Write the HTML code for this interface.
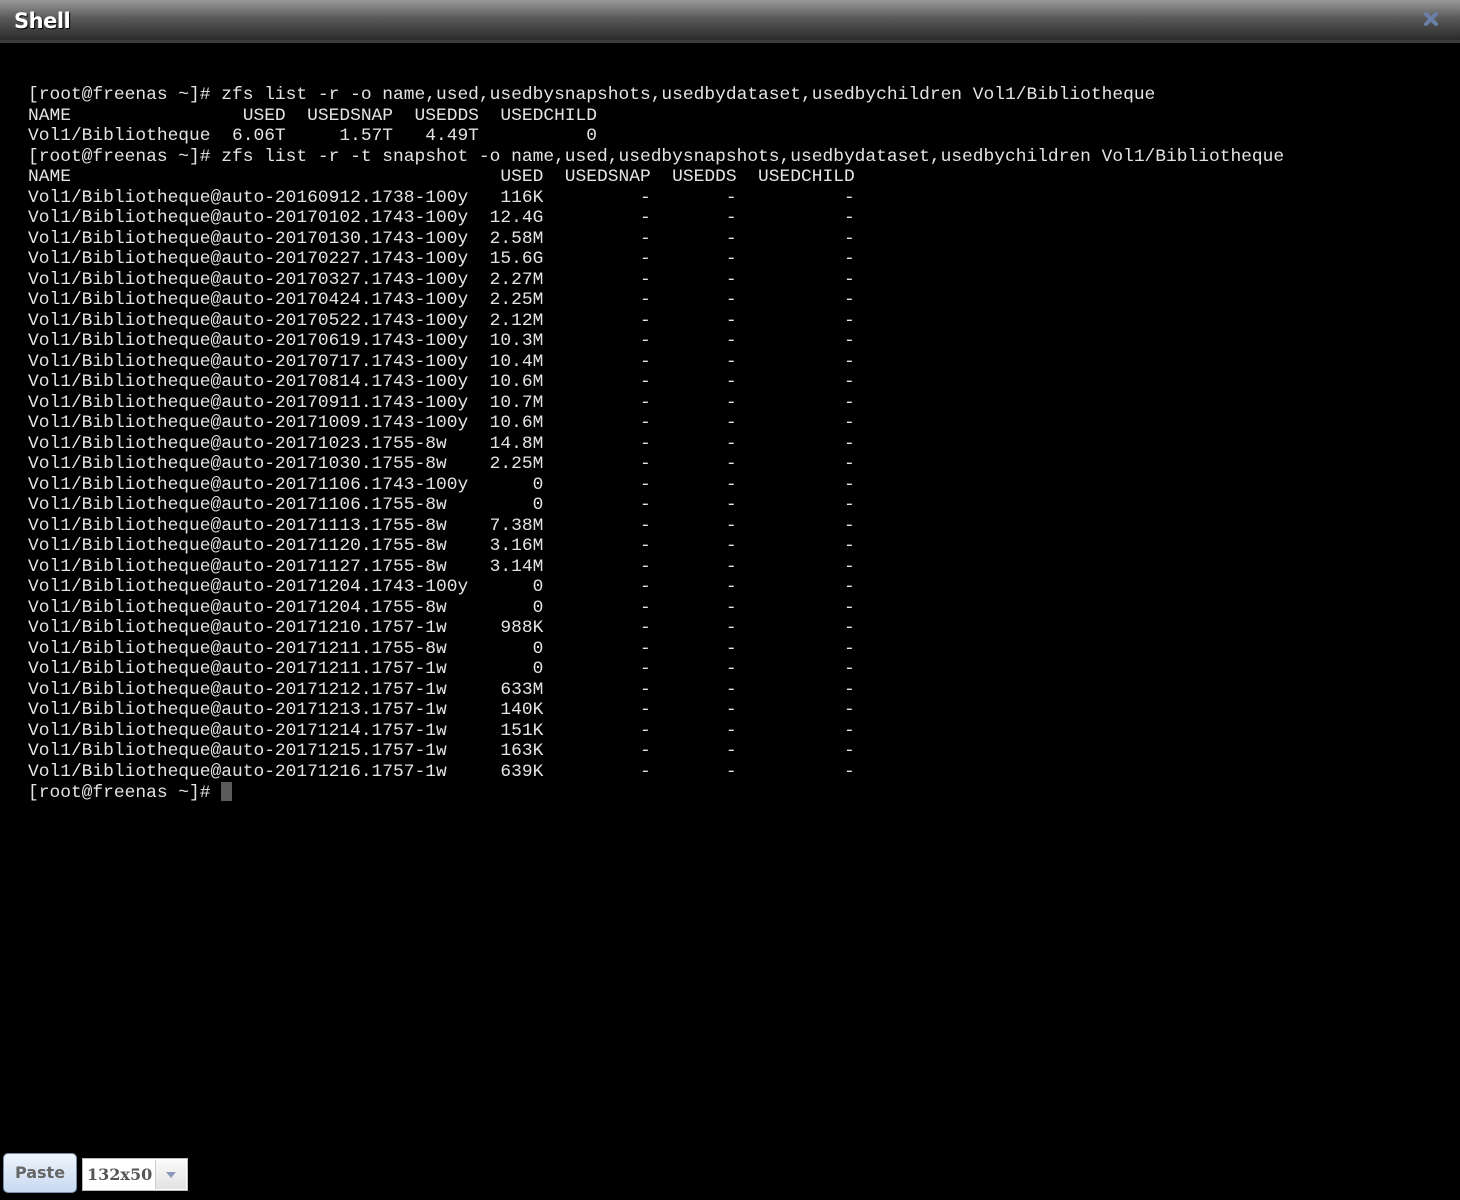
<!DOCTYPE html>
<html><head><meta charset="utf-8"><style>
html,body{margin:0;padding:0;background:#000;width:1460px;height:1200px;overflow:hidden}
.hdr{position:absolute;left:0;top:0;width:1460px;height:40px;background:linear-gradient(#9a9a9a,#5a5a5a 45%,#2a2a2a);border-bottom:3px solid #3c3c3c}
.hdr .t{position:absolute;left:14px;top:9px;font:bold 21px "DejaVu Sans","Liberation Sans",sans-serif;color:#fff;text-shadow:1px 1px 1px #000;letter-spacing:-0.5px}
.hdr svg{position:absolute;left:1422px;top:10px}
pre{position:absolute;left:28px;top:85px;margin:0;font-family:"Liberation Mono","Courier New",monospace;font-size:17.9px;line-height:20.5px;color:#e4e4e4}
.cur{display:inline-block;width:11px;height:19px;background:#5a5a5a;vertical-align:-4px}
.paste{position:absolute;left:3px;top:1153px;width:74px;height:40px;border:1px solid #7a8eaa;border-radius:5px;background:linear-gradient(#eef4fc,#c8daf0);font:bold 16px "DejaVu Sans",sans-serif;color:#666;text-align:center;line-height:38px;box-sizing:border-box}
.sel{position:absolute;left:82px;top:1158px;width:106px;height:33px;background:#fff;border:1px solid #bbb;box-sizing:border-box}
.sel .v{position:absolute;left:4px;top:6px;font:bold 16px "DejaVu Serif","Liberation Serif",serif;color:#555}
.sel .b{position:absolute;right:1px;top:1px;width:30px;height:29px;background:linear-gradient(#fafafa,#e2e2e2);border-left:1px solid #ccc}
.sel .b:after{content:"";position:absolute;left:10px;top:12px;border-left:5px solid transparent;border-right:5px solid transparent;border-top:6px solid #8899bb}
</style></head><body>
<div class="hdr"><div class="t">Shell</div><svg width="18" height="18" viewBox="0 0 18 18"><path d="M4 4L14 14M14 4L4 14" stroke="#6b7fa6" stroke-width="4" stroke-linecap="round"/></svg></div>
<pre>[root@freenas ~]# zfs list -r -o name,used,usedbysnapshots,usedbydataset,usedbychildren Vol1/Bibliotheque
NAME                USED  USEDSNAP  USEDDS  USEDCHILD
Vol1/Bibliotheque  6.06T     1.57T   4.49T          0
[root@freenas ~]# zfs list -r -t snapshot -o name,used,usedbysnapshots,usedbydataset,usedbychildren Vol1/Bibliotheque
NAME                                        USED  USEDSNAP  USEDDS  USEDCHILD
Vol1/Bibliotheque@auto-20160912.1738-100y   116K         -       -          -
Vol1/Bibliotheque@auto-20170102.1743-100y  12.4G         -       -          -
Vol1/Bibliotheque@auto-20170130.1743-100y  2.58M         -       -          -
Vol1/Bibliotheque@auto-20170227.1743-100y  15.6G         -       -          -
Vol1/Bibliotheque@auto-20170327.1743-100y  2.27M         -       -          -
Vol1/Bibliotheque@auto-20170424.1743-100y  2.25M         -       -          -
Vol1/Bibliotheque@auto-20170522.1743-100y  2.12M         -       -          -
Vol1/Bibliotheque@auto-20170619.1743-100y  10.3M         -       -          -
Vol1/Bibliotheque@auto-20170717.1743-100y  10.4M         -       -          -
Vol1/Bibliotheque@auto-20170814.1743-100y  10.6M         -       -          -
Vol1/Bibliotheque@auto-20170911.1743-100y  10.7M         -       -          -
Vol1/Bibliotheque@auto-20171009.1743-100y  10.6M         -       -          -
Vol1/Bibliotheque@auto-20171023.1755-8w    14.8M         -       -          -
Vol1/Bibliotheque@auto-20171030.1755-8w    2.25M         -       -          -
Vol1/Bibliotheque@auto-20171106.1743-100y      0         -       -          -
Vol1/Bibliotheque@auto-20171106.1755-8w        0         -       -          -
Vol1/Bibliotheque@auto-20171113.1755-8w    7.38M         -       -          -
Vol1/Bibliotheque@auto-20171120.1755-8w    3.16M         -       -          -
Vol1/Bibliotheque@auto-20171127.1755-8w    3.14M         -       -          -
Vol1/Bibliotheque@auto-20171204.1743-100y      0         -       -          -
Vol1/Bibliotheque@auto-20171204.1755-8w        0         -       -          -
Vol1/Bibliotheque@auto-20171210.1757-1w     988K         -       -          -
Vol1/Bibliotheque@auto-20171211.1755-8w        0         -       -          -
Vol1/Bibliotheque@auto-20171211.1757-1w        0         -       -          -
Vol1/Bibliotheque@auto-20171212.1757-1w     633M         -       -          -
Vol1/Bibliotheque@auto-20171213.1757-1w     140K         -       -          -
Vol1/Bibliotheque@auto-20171214.1757-1w     151K         -       -          -
Vol1/Bibliotheque@auto-20171215.1757-1w     163K         -       -          -
Vol1/Bibliotheque@auto-20171216.1757-1w     639K         -       -          -
[root@freenas ~]# <span class="cur"></span></pre>
<div class="paste">Paste</div>
<div class="sel"><div class="v">132x50</div><div class="b"></div></div>
</body></html>
